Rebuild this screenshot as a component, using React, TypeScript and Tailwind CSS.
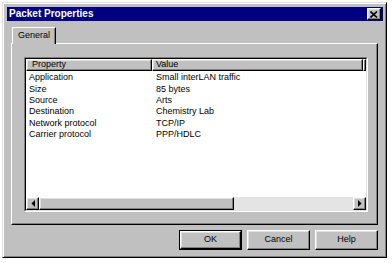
const font = { fontFamily: '"Liberation Sans", Arial, sans-serif' };

const raised =
  "border border-t-white border-l-white border-r-black border-b-black shadow-[inset_-1px_-1px_0_#808080,inset_1px_1px_0_#dfdfdf] bg-[#c0c0c0]";

const rows: [string, string][] = [
  ["Application", "Small interLAN traffic"],
  ["Size", "85 bytes"],
  ["Source", "Arts"],
  ["Destination", "Chemistry Lab"],
  ["Network protocol", "TCP/IP"],
  ["Carrier protocol", "PPP/HDLC"],
];

function Arrow({ dir }: { dir: "left" | "right" }) {
  return (
    <div className={`w-[13px] h-full flex items-center justify-center ${raised}`}>
      <svg width="4" height="7" viewBox="0 0 4 7">
        {dir === "left" ? (
          <polygon points="4,0 4,7 0.5,3.5" fill="#000" />
        ) : (
          <polygon points="0,0 0,7 3.5,3.5" fill="#000" />
        )}
      </svg>
    </div>
  );
}

function Button({ label, def }: { label: string; def?: boolean }) {
  return (
    <div className={`w-[63px] h-[20px] ${def ? "border border-black" : ""}`}>
      <div className={`w-full h-full flex items-center justify-center text-[9px] text-black ${raised}`}>
        {label}
      </div>
    </div>
  );
}

export default function App() {
  return (
    <div className="w-[392px] h-[263px] bg-white pt-[2px] pl-[2px]" style={font}>
      {/* Dialog window */}
      <div className="w-[385px] h-[256px] bg-[#c0c0c0] border border-t-[#dfdfdf] border-l-[#dfdfdf] border-r-black border-b-black shadow-[inset_1px_1px_0_#fff,inset_-1px_-1px_0_#808080] pt-[4px] pl-[4px] pr-[3px] flex flex-col">
        {/* Title bar */}
        <div className="h-[14px] bg-[#000080] flex items-center justify-between pl-[2px] pr-[2px]">
          <span className="text-white font-bold text-[10px] leading-none">Packet Properties</span>
          <div className={`w-[14px] h-[12px] flex items-center justify-center ${raised}`}>
            <svg width="8" height="7" viewBox="0 0 8 7">
              <path d="M0.5 0.5 L7 6.5 M7 0.5 L0.5 6.5" stroke="#000" strokeWidth="1.6" />
            </svg>
          </div>
        </div>

        {/* Tab */}
        <div className="mt-[6px] ml-[5px] flex">
          <div className="relative z-10 w-[44px] h-[17px] -mb-px bg-[#c0c0c0] border-t border-l border-r border-t-white border-l-white border-r-black shadow-[inset_-1px_0_0_#808080] flex items-center justify-center text-[9px] text-black">
            General
          </div>
        </div>

        {/* Tab panel */}
        <div className="ml-[4px] w-[367px] h-[182px] border border-t-white border-l-white border-r-black border-b-black shadow-[inset_-1px_-1px_0_#808080] pt-[13px] pl-[12px]">
          {/* List view */}
          <div className="w-[344px] h-[155px] border border-t-[#808080] border-l-[#808080] border-r-white border-b-white">
            <div className="w-full h-full border border-t-black border-l-black border-r-[#dfdfdf] border-b-[#dfdfdf] bg-white flex flex-col text-[9px] text-black">
              <div className="h-[12px] flex">
                <div className={`w-[126px] h-full flex items-center pl-[5px] ${raised}`}>Property</div>
                <div className={`w-[211px] h-full flex items-center pl-[3px] ${raised}`}>Value</div>
                <div className={`flex-1 h-full ${raised}`} />
              </div>
              <div className="flex-1 pt-[1px]">
                {rows.map(([k, v]) => (
                  <div key={k} className="flex h-[11.4px] items-center leading-none">
                    <div className="w-[126px] pl-[3px]">{k}</div>
                    <div className="pl-[4px]">{v}</div>
                  </div>
                ))}
              </div>
              {/* Horizontal scrollbar */}
              <div className="h-[13px] flex">
                <Arrow dir="left" />
                <div className={`w-[195px] h-full ${raised}`} />
                <div className="flex-1 h-full bg-[#e4e4e4]" />
                <Arrow dir="right" />
              </div>
            </div>
          </div>
        </div>

        {/* Buttons */}
        <div className="mt-[5px] ml-[4px] w-[367px] flex justify-end gap-[5px]">
          <Button label="OK" def />
          <Button label="Cancel" />
          <Button label="Help" />
        </div>
      </div>
    </div>
  );
}
